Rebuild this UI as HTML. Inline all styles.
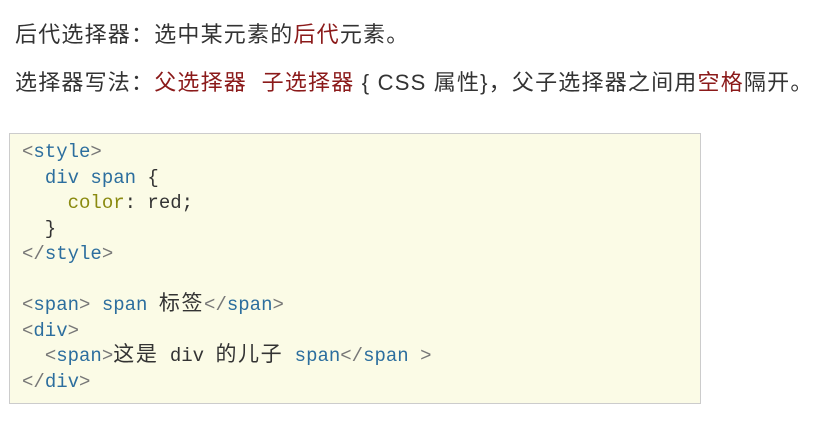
<!DOCTYPE html>
<html><head><meta charset="utf-8"><style>
body{margin:0;width:821px;height:428px;background:#fff;overflow:hidden;font-family:"Liberation Sans","Noto Sans CJK SC",sans-serif;color:#333;position:relative}
.t{position:absolute;left:15px;font-size:22px;letter-spacing:1.2px;white-space:nowrap;line-height:26px}
.r{color:#8b1a1a}
.box{position:absolute;left:9px;top:133px;width:690px;height:269px;background:#fbfbe6;border:1px solid #ccc}
pre{margin:0;position:absolute;left:22px;top:140px;font-family:"Liberation Mono","Noto Sans CJK SC",monospace;font-size:19px;line-height:25.5px;color:#333}
.g{color:#777}.b{color:#2c6e9e}.y{color:#8a8a10}
.c{font-size:21px;letter-spacing:1.6px;line-height:20px}
</style></head><body>
<div class="t" style="top:22px">后代选择器：选中某元素的<span class="r">后代</span>元素。</div>
<div class="t" style="top:70px">选择器写法：<span class="r">父选择器&nbsp; 子选择器</span> { CSS 属性}，父子选择器之间用<span class="r">空格</span>隔开。</div>
<div class="box"></div>
<pre><span class="g">&lt;</span><span class="b">style</span><span class="g">&gt;</span>
  <span class="b">div span</span> {
    <span class="y">color</span>: red;
  }
<span class="g">&lt;/</span><span class="b">style</span><span class="g">&gt;</span>

<span class="g">&lt;</span><span class="b">span</span><span class="g">&gt;</span> <span class="b">span</span> <span class="c">标签</span><span class="g">&lt;/</span><span class="b">span</span><span class="g">&gt;</span>
<span class="g">&lt;</span><span class="b">div</span><span class="g">&gt;</span>
  <span class="g">&lt;</span><span class="b">span</span><span class="g">&gt;</span><span class="c">这是</span> div <span class="c">的儿子</span> <span class="b">span</span><span class="g">&lt;/</span><span class="b">span</span> <span class="g">&gt;</span>
<span class="g">&lt;/</span><span class="b">div</span><span class="g">&gt;</span></pre>
</body></html>
